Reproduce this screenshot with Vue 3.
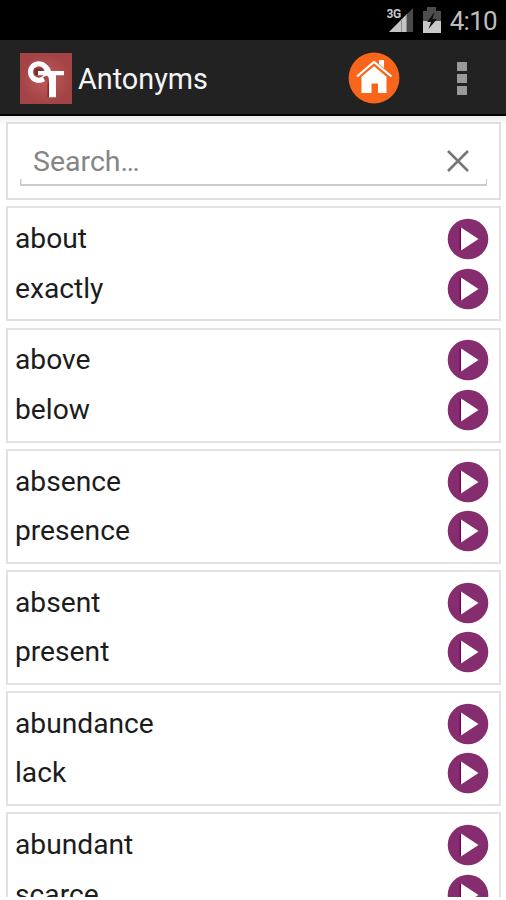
<template>
  <div class="screen">
    <div class="status-bar">
      <svg class="signal" width="27" height="26" viewBox="0 0 27 26">
        <path d="M2 25 L26 1 V25 Z" fill="#4a4a4a" />
        <path d="M2 25 L20 7 V25 Z" fill="#c4c4c4" />
        <path d="M14.5 12 V25 M19.5 8 V25" stroke="#8c8c8c" stroke-width="1" />
        <text x="-0.5" y="11" class="network">3G</text>
      </svg>
      <svg class="battery" width="18" height="26" viewBox="0 0 18 26">
        <path d="M0 4 H4 V0 H13 V4 H18 V14 H0 Z" fill="#4d4d4d" />
        <path d="M0 14 H18 V26 H0 Z" fill="#c8c8c8" />
        <path d="M11.5 5 L4 15 H8 L5.5 22 L14 12 H9.5 Z" fill="#111" />
      </svg>
      <span class="clock">4:10</span>
    </div>

    <header class="action-bar">
      <svg class="logo" width="52" height="51" viewBox="0 0 52 51">
        <defs>
          <radialGradient id="logoBg">
            <stop offset="0" stop-color="#bf5c5c" />
            <stop offset="1" stop-color="#a34345" />
          </radialGradient>
        </defs>
        <rect width="52" height="51" fill="url(#logoBg)" />
        <path d="M27.5 23 H30 V44 H27.5 Z" fill="#8a2529" />
        <circle cx="18.8" cy="19" r="8.3" fill="#a04a4c" stroke="#fff" stroke-width="5" />
        <path d="M23 24 L29 22 V30 L25 28 Z" fill="#a84a4b" />
        <path d="M14.5 15.5 H22.5 V17.8 H18 V22 H15 Z" fill="#7d2b2f" />
        <path d="M18 18 H44 V22.2 H36 V44.2 H29 V28 Q29 24 27 22.2 H18 Z" fill="#fff" />
        <path d="M24 11 Q31 13 31 19 H26 Z" fill="#fff" />
      </svg>
      <h1>Antonyms</h1>
      <svg class="home" width="52" height="52" viewBox="0 0 52 52">
        <circle cx="26" cy="26" r="25.4" fill="#f9651b" />
        <path d="M31 8 H36 V16 L31 12 Z" fill="#fff" />
        <path d="M9 24.5 L26 10 L43.5 24.5" fill="none" stroke="#fff" stroke-width="2.2" />
        <path d="M26 14.3 L38.5 24.8 V41 H30 V31.5 H23.5 V41 H13.5 V24.8 Z" fill="#fff" />
      </svg>
      <div class="overflow">
        <i></i>
        <i></i>
        <i></i>
      </div>
    </header>

    <main>
      <div class="search-card">
        <div class="search">
          <input v-model="query" type="text" placeholder="Search…" />
          <svg width="24" height="24" viewBox="0 0 24 24" @click="query = ''">
            <path d="M2 2 L22 22 M22 2 L2 22" stroke="#777" stroke-width="2.6" />
          </svg>
        </div>
      </div>

      <div class="card" v-for="pair in filtered" :key="pair[0]">
        <div class="row" v-for="word in pair" :key="word">
          <span>{{ word }}</span>
          <svg width="42" height="42" viewBox="0 0 42 42">
            <circle cx="21" cy="21" r="20.3" fill="#862d70" />
            <path d="M13.4 10 V32" stroke="#79005f" stroke-width="1.6" />
            <path d="M14 9.5 L31.5 21 L14 32.5 Z" fill="#fff" />
          </svg>
        </div>
      </div>
    </main>
  </div>
</template>

<script setup>
import { ref, computed } from "vue";

const query = ref("");

const pairs = [
  ["about", "exactly"],
  ["above", "below"],
  ["absence", "presence"],
  ["absent", "present"],
  ["abundance", "lack"],
  ["abundant", "scarce"],
];

const filtered = computed(() =>
  pairs.filter((pair) => pair.some((word) => word.includes(query.value.toLowerCase())))
);
</script>

<style>
body {
  background: #fff;
  overflow: hidden;
}
</style>

<style scoped>
.screen {
  display: flex;
  flex-direction: column;
  height: 897px;
  overflow: hidden;
  background: #fff;
  font-family: Roboto, sans-serif;
}

.status-bar {
  flex: none;
  display: flex;
  align-items: center;
  justify-content: flex-end;
  box-sizing: border-box;
  height: 40px;
  padding-right: 9px;
  background: #000;
}

.signal {
  margin-right: 9px;
}

.network {
  font-size: 12px;
  font-weight: 700;
  fill: #c8c8c8;
  stroke: #000;
  stroke-width: 2px;
  paint-order: stroke;
  letter-spacing: -0.5px;
}

.battery {
  margin-right: 9px;
}

.clock {
  padding-top: 2px;
  font-size: 26px;
  line-height: 38px;
  letter-spacing: -0.7px;
  color: #bdbdbd;
}

.action-bar {
  flex: none;
  display: flex;
  align-items: center;
  box-sizing: border-box;
  height: 76px;
  padding: 4px 39px 2px 20px;
  background: #222;
  border-bottom: 2px solid #000;
}

h1 {
  flex: 1;
  margin: 2px 0 0 6px;
  font-size: 28.8px;
  font-weight: 400;
  color: #f4f4f4;
}

.home {
  margin-right: 57px;
}

.overflow {
  display: flex;
  flex-direction: column;
  gap: 3px;
}

.overflow i {
  width: 10px;
  height: 9px;
  background: #999;
}

main {
  display: flex;
  flex-direction: column;
  gap: 6.2px;
  padding: 6px 5px 0 6px;
  background: linear-gradient(#ececec, #fff 9px);
}

.search-card,
.card {
  flex: none;
  box-sizing: border-box;
  border: 2px solid #e2e2e2;
  background: #fff;
}

.search-card {
  height: 78.3px;
  padding: 12px 12px 0;
  border-color: #e0dede;
}

.search {
  display: flex;
  align-items: center;
  justify-content: space-between;
  height: 50px;
  padding: 0 17px 0 13px;
  /* only the last few pixels of the sides are drawn, as on a holo text field */
  background:
    linear-gradient(#ccc, #ccc) left bottom / 1.5px 7px no-repeat,
    linear-gradient(#ccc, #ccc) right bottom / 1.5px 7px no-repeat,
    linear-gradient(#ccc, #ccc) left bottom / 100% 2px no-repeat;
}

.search input {
  width: 300px;
  padding: 0;
  border: 0;
  outline: 0;
  background: none;
  font: 28.5px Roboto, sans-serif;
  color: #222;
}

.search input::placeholder {
  color: #858585;
  opacity: 1;
}

.card {
  height: 115px;
  padding: 6px 10px 6px 7px;
}

.row {
  display: flex;
  align-items: center;
  justify-content: space-between;
  height: 49.5px;
  font-size: 28.2px;
  color: #1c1c1c;
}

.row span {
  padding-bottom: 1px;
}
</style>
